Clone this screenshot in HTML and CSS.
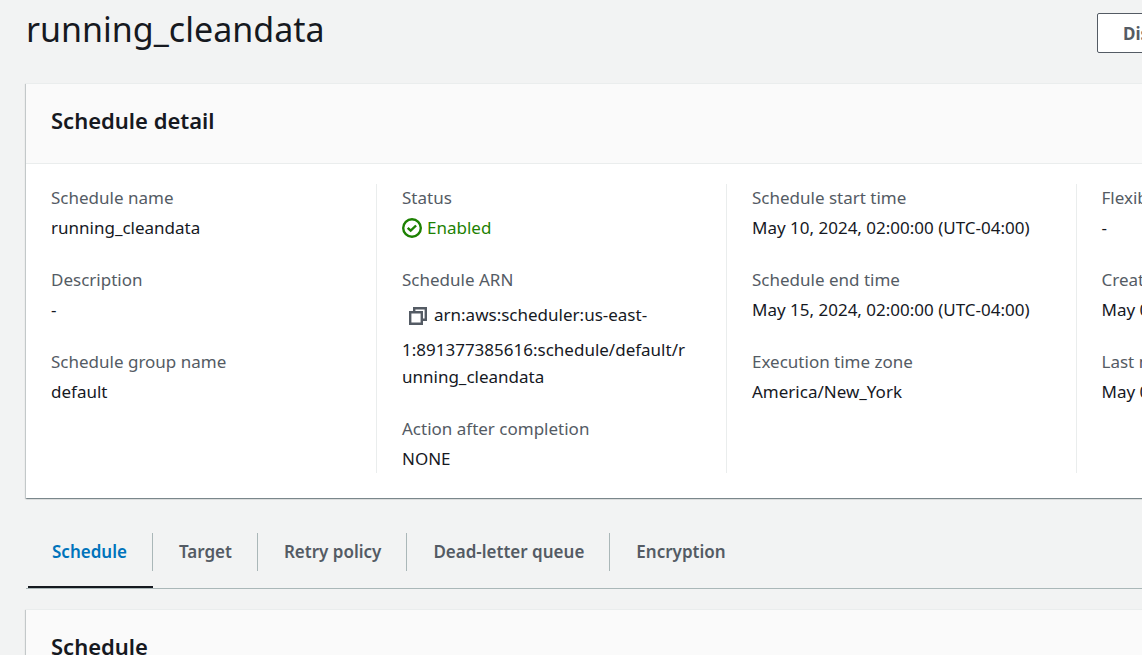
FILE: index.html
```html
<!DOCTYPE html>
<html lang="en">
<head>
<meta charset="utf-8">
<title>running_cleandata</title>
<link rel="stylesheet" href="styles.css">
</head>
<body>
<main class="page">
  <header class="page-header">
    <h1 class="page-title">running_cleandata</h1>
    <div class="actions"><button type="button" class="button">Disable</button></div>
  </header>

  <section class="card">
    <header class="card-header"><h2 class="card-title">Schedule detail</h2></header>
    <div class="columns">
      <dl class="column">
        <div><dt>Schedule name</dt><dd>running_cleandata</dd></div>
        <div><dt>Description</dt><dd>-</dd></div>
        <div><dt>Schedule group name</dt><dd>default</dd></div>
      </dl>
      <dl class="column">
        <div><dt>Status</dt><dd class="status"><svg class="status-icon" viewBox="0 0 20 20" aria-hidden="true"><circle cx="10" cy="10" r="8.8"/><path d="M5.7 9.8l3 2.9 5.4-5.2"/></svg>Enabled</dd></div>
        <div><dt>Schedule ARN</dt><dd class="arn"><button type="button" class="copy" aria-label="Copy ARN"><svg class="copy-icon" viewBox="0 0 18 18" aria-hidden="true"><path d="M1.2 5.2h11.6v11.6H1.2z"/><path d="M5.2 5V1.2h11.6v11.6H13"/></svg></button>arn:aws:scheduler:us-east-<wbr>1:891377385616:schedule/default/r<wbr>unning_cleandata</dd></div>
        <div><dt>Action after completion</dt><dd>NONE</dd></div>
      </dl>
      <dl class="column">
        <div><dt>Schedule start time</dt><dd>May 10, 2024, 02:00:00 (UTC-04:00)</dd></div>
        <div><dt>Schedule end time</dt><dd>May 15, 2024, 02:00:00 (UTC-04:00)</dd></div>
        <div><dt>Execution time zone</dt><dd>America/New_York</dd></div>
      </dl>
      <dl class="column">
        <div><dt>Flexible time window</dt><dd>-</dd></div>
        <div><dt>Created date</dt><dd>May 09, 2024</dd></div>
        <div><dt>Last modified date</dt><dd>May 09, 2024</dd></div>
      </dl>
    </div>
  </section>

  <nav class="tabs" aria-label="Schedule sections">
    <a class="tab tab-active" href="#schedule" aria-current="page"><span class="tab-label">Schedule</span></a>
    <a class="tab" href="#target"><span class="tab-label">Target</span></a>
    <a class="tab" href="#retry"><span class="tab-label">Retry policy</span></a>
    <a class="tab" href="#dlq"><span class="tab-label">Dead-letter queue</span></a>
    <a class="tab" href="#encryption"><span class="tab-label">Encryption</span></a>
  </nav>

  <section class="card" id="schedule">
    <header class="card-header"><h2 class="card-title">Schedule</h2></header>
  </section>
</main>
</body>
</html>
```
FILE: styles.css
```css
* { box-sizing: border-box; }

body {
  margin: 0;
  background: #f2f3f3;
  color: #16191f;
  font: 17px/27px "Noto Sans", sans-serif;
  overflow: hidden;
}

h1, h2, dl, dd { margin: 0; }

.page {
  min-width: 1426px;
  padding: 8px 0 0 26px;
}

.page-header {
  display: flex;
  justify-content: space-between;
  align-items: flex-start;
  margin-bottom: 27px;
  min-height: 48px;
}

.page-title {
  font-size: 34px;
  line-height: 42px;
  font-weight: 400;
}

.actions {
  flex: 0 0 329px;
  padding-top: 5px;
}

.button {
  height: 40px;
  padding: 0 25px;
  border: 1px solid #545b64;
  border-radius: 2px;
  background: #fff;
  color: #545b64;
  font: inherit;
  font-weight: 700;
}

.card {
  background: #fff;
  border-top: 1px solid #eaeded;
  box-shadow: 0 1px 1px 0 rgba(0, 28, 36, 0.3), 1px 1px 1px 0 rgba(0, 28, 36, 0.15), -1px 1px 1px 0 rgba(0, 28, 36, 0.15);
}

.card-header {
  padding: 19px 25px 26px;
  border-bottom: 1px solid #eaeded;
  background: #fafafa;
}

.card-title {
  font-size: 22px;
  line-height: 34px;
  font-weight: 600;
}

.columns {
  display: grid;
  grid-template-columns: 351px 350px repeat(2, minmax(349px, 1fr));
  padding: 20px 0 25px;
}

.column {
  display: flex;
  flex-direction: column;
  gap: 25px;
  padding: 0 25px 1px;
  border-right: 1px solid #eaeded;
}

.column:last-child { border-right: 0; }

dt { margin-bottom: 3px; color: #545b64; }

.status {
  display: flex;
  align-items: center;
  gap: 5px;
  color: #1d8102;
}

.status-icon {
  width: 20px;
  height: 20px;
  fill: none;
  stroke: currentColor;
  stroke-width: 2.4;
}

.arn { overflow-wrap: anywhere; }

.copy {
  height: 40px;
  padding: 0 7px;
  border: 0;
  background: none;
  color: #545b64;
  vertical-align: middle;
}

.copy-icon {
  display: block;
  width: 18px;
  height: 18px;
  fill: none;
  stroke: currentColor;
  stroke-width: 2.4;
}

.tabs {
  display: flex;
  margin: 35px 0 20px;
  padding-left: 2px;
  border-bottom: 1px solid #aab7b8;
}

.tab {
  padding-bottom: 15px;
  border-bottom: 2px solid transparent;
  color: #545b64;
  font-weight: 600;
  text-decoration: none;
}

.tab-active { border-color: #16191f; color: #0073bb; }

.tab-label {
  display: block;
  padding: 5px 25px 6px 26px;
  border-right: 1px solid #aab7b8;
}

.tab-active .tab-label { padding-left: 24px; }

.tab:last-child .tab-label { border-right: 0; }
```
